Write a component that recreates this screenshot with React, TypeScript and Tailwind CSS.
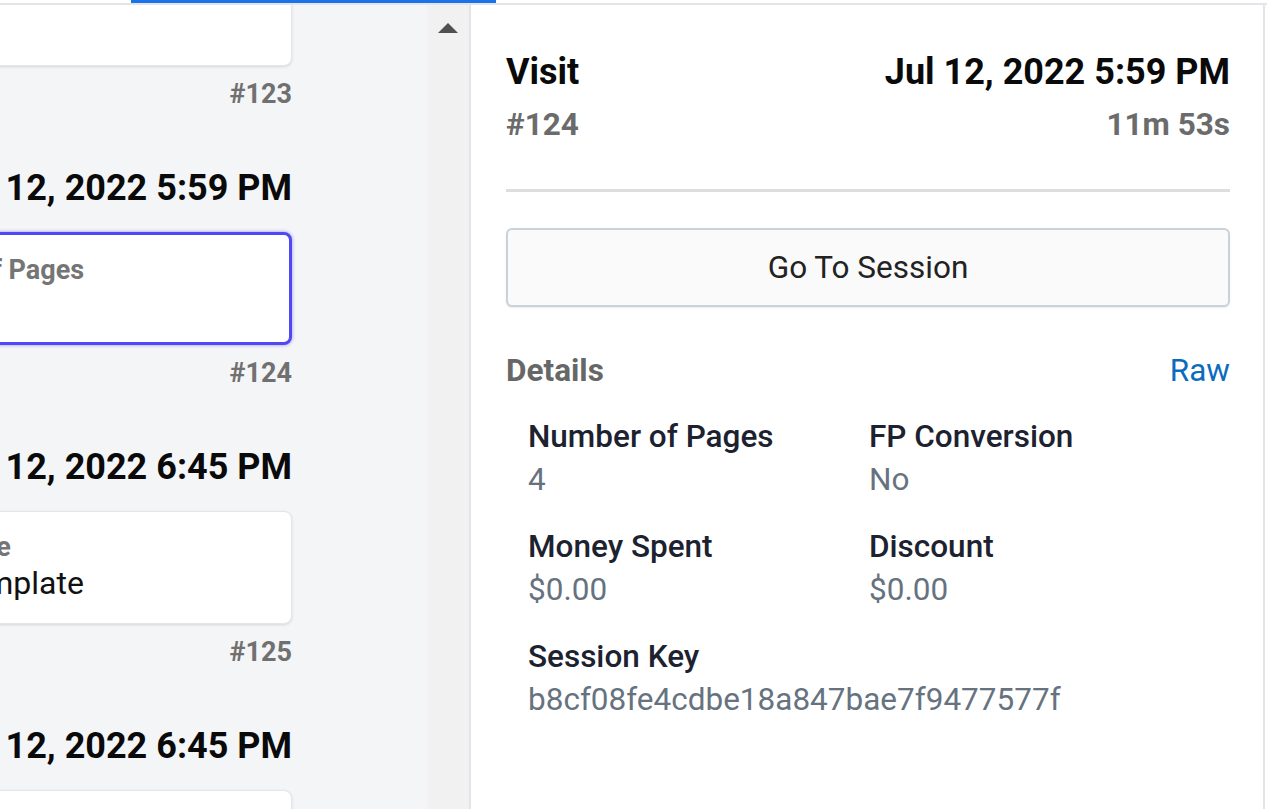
import { ReactNode } from "react"

type Visit = {
  id: number
  date?: string
  label: string
  value: string
  selected?: boolean
}

const visits: Visit[] = [
  { id: 123, label: "Page", value: "Home" },
  { id: 124, date: "Jul 12, 2022 5:59 PM", label: "Number of Pages", value: "4", selected: true },
  { id: 125, date: "Jul 12, 2022 6:45 PM", label: "Page Name", value: "Page Template" },
  { id: 126, date: "Jul 12, 2022 6:45 PM", label: "Page Name", value: "Page Template" },
]

function VisitCard({ v }: { v: Visit }) {
  const base = "h-[113px] rounded-lg bg-white px-5"
  const look = v.selected
    ? "border-[3px] border-[#5048f4] pt-[19px] shadow-[0_0_3px_1px_rgba(80,72,244,0.35)]"
    : "border border-[#e4e6ea] pt-[19px] shadow-[0_1px_3px_rgba(0,0,0,0.12)]"
  return (
    <div className={`${base} ${look}`}>
      <p className="text-[27px] leading-[32px] font-bold text-[#757575] whitespace-nowrap">{v.label}</p>
      <p className="text-[32px] leading-[40px] text-[#111] whitespace-nowrap">{v.value}</p>
    </div>
  )
}

function Field({ label, children }: { label: string; children: ReactNode }) {
  return (
    <div>
      <p className="text-[31.5px] leading-[40px] font-medium text-[#1c2230]">{label}</p>
      <p className="text-[31.5px] leading-[46px] text-[#66737f]">{children}</p>
    </div>
  )
}

export default function App() {
  return (
    <div className="h-screen w-full overflow-hidden flex flex-col bg-white font-['Roboto',sans-serif]">
      <div className="h-[3px] flex shrink-0">
        <div className="w-[131px]" />
        <div className="w-[365px] bg-[#1a73e8]" />
      </div>
      <div className="h-[2px] bg-[#e3e5e9] shrink-0" />

      <div className="flex flex-1 min-h-0">
        {/* visit list */}
        <section className="w-[427px] bg-[#f4f5f7] overflow-hidden shrink-0">
          <div className="flex flex-col -mt-[52px] -ml-[150px] w-[442px]">
            {visits.map((v) => (
              <div key={v.id} className="flex flex-col">
                {v.date ? (
                  <h3 className="mt-[54px] mb-[22px] text-[36px] leading-[44px] font-bold text-[#0a0a0a] text-right whitespace-nowrap">
                    {v.date}
                  </h3>
                ) : null}
                <VisitCard v={v} />
                <p className="mt-[10px] text-[27px] leading-[36px] font-bold text-[#707070] text-right">#{v.id}</p>
              </div>
            ))}
          </div>
        </section>

        {/* scrollbar */}
        <div className="w-[42px] bg-[#f1f1f1] shrink-0 flex justify-center pt-[18px]">
          <div className="w-0 h-0 border-l-[10px] border-r-[10px] border-b-[10px] border-l-transparent border-r-transparent border-b-[#505050]" />
        </div>

        {/* detail panel */}
        <section className="w-[796px] shrink-0 border-l-2 border-r-2 border-[#e1e4e9] pl-[35px] pr-[33px] pt-[45px]">
          <div className="flex justify-between items-start">
            <div>
              <h2 className="text-[36px] leading-[44px] font-bold text-[#0a0a0a]">Visit</h2>
              <p className="mt-[11px] text-[31.5px] leading-[40px] font-bold text-[#6b6b6b]">#124</p>
            </div>
            <div className="text-right">
              <h2 className="text-[36px] leading-[44px] font-bold text-[#0a0a0a]">Jul 12, 2022 5:59 PM</h2>
              <p className="mt-[11px] text-[31.5px] leading-[40px] font-bold text-[#6b6b6b]">11m 53s</p>
            </div>
          </div>

          <div className="mt-[44px] h-[3px] bg-[#dedede]" />

          <button className="mt-[36px] w-full h-[79px] rounded-md border-2 border-[#c9d1da] bg-[#fafafa] shadow-[0_1px_2px_rgba(0,0,0,0.08)] text-[31.5px] text-[#222]">
            Go To Session
          </button>

          <div className="mt-[44px] flex justify-between">
            <h4 className="text-[31.5px] leading-[40px] font-bold text-[#676767]">Details</h4>
            <span className="text-[31.5px] leading-[40px] text-[#0b6cbd]">Raw</span>
          </div>

          <div className="mt-[26px] pl-[22px] grid grid-cols-[341px_1fr] gap-y-6">
            <Field label="Number of Pages">4</Field>
            <Field label="FP Conversion">No</Field>
            <Field label="Money Spent">$0.00</Field>
            <Field label="Discount">$0.00</Field>
            <div className="col-span-2">
              <Field label="Session Key">b8cf08fe4cdbe18a847bae7f9477577f</Field>
            </div>
          </div>
        </section>
        <div className="flex-1 bg-white" />
      </div>
    </div>
  )
}
